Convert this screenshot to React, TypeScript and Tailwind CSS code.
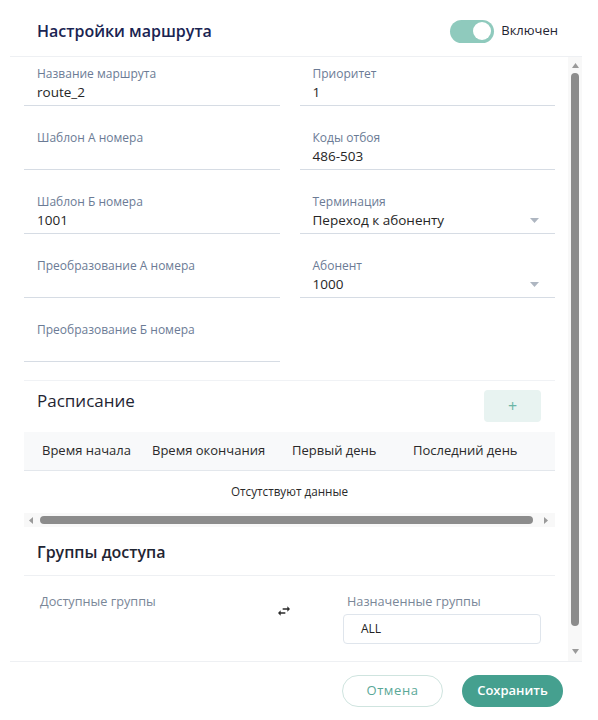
import React from "react";

function Field({ label, value, select }: { label?: string; value?: string; select?: boolean }) {
  if (!label) return <div />;
  return (
    <div className="px-[13px] pb-[3px] border-b border-[#d6dce4]">
      <div className="h-[16px] leading-[16px] text-[12px] text-[#6b7b95]">{label}</div>
      <div className="h-[20px] leading-[20px] text-[13.5px] text-[#262626] flex items-center justify-between">
        <span>{value}</span>
        {select && (
          <svg width="9" height="5" viewBox="0 0 9 5" className="mr-[3px]">
            <path d="M0 0h9L4.5 5z" fill="#aeb6c1" />
          </svg>
        )}
      </div>
    </div>
  );
}

export default function App() {
  return (
    <div className="w-[598px] h-[720px] bg-white font-['Open_Sans',sans-serif] overflow-hidden">
      <div className="ml-[10px] w-[572px] h-[720px] flex flex-col">
        {/* header */}
        <div className="h-[57px] shrink-0 pt-[6px] pl-[27px] pr-[24px] flex items-center justify-between border-b border-[#eef0f3]">
          <div className="text-[16px] font-semibold text-[#1a2452]">Настройки маршрута</div>
          <div className="flex items-center gap-[7px]">
            <div className="w-[44px] h-[23px] rounded-full bg-[#8fcabd] flex items-center justify-end pr-[3px]">
              <div className="w-[18px] h-[18px] rounded-full bg-white" />
            </div>
            <span className="text-[13px] font-medium text-[#1f2533]">Включен</span>
          </div>
        </div>

        {/* body */}
        <div className="h-[604px] shrink-0 flex">
          <div className="w-[558px] shrink-0 pl-[14px] pr-[13px] overflow-hidden">
            <div className="grid grid-cols-2 gap-x-5 gap-y-[24px] pt-[9px]">
              <Field label="Название маршрута" value="route_2" />
              <Field label="Приоритет" value="1" />
              <Field label="Шаблон А номера" value="" />
              <Field label="Коды отбоя" value="486-503" />
              <Field label="Шаблон Б номера" value="1001" />
              <Field label="Терминация" value="Переход к абоненту" select />
              <Field label="Преобразование А номера" value="" />
              <Field label="Абонент" value="1000" select />
              <Field label="Преобразование Б номера" value="" />
              <div />
            </div>

            {/* schedule */}
            <div className="mt-[18px] border-t border-[#f0f2f5] pt-[9px]">
              <div className="flex items-start justify-between">
                <div className="pl-[13px] pt-0 text-[17px] leading-[22px] text-[#1f2533]">Расписание</div>
                <div className="w-[57px] h-[32px] mr-[14px] rounded-[4px] bg-[#e8f3f1] flex items-center justify-center text-[#6ab5a6] text-[16px]">
                  +
                </div>
              </div>
              <div className="mt-[10px] h-[39px] bg-[#f8f9fa] border-b border-[#e3e7ec] flex items-center pl-[18px] text-[13px] text-[#2a2a2a]">
                <div className="w-[110px]">Время начала</div>
                <div className="w-[140px]">Время окончания</div>
                <div className="w-[121px]">Первый день</div>
                <div>Последний день</div>
              </div>
              <div className="h-[41px] flex items-center justify-center text-[11.7px] text-[#2a2a2a]">Отсутствуют данные</div>
              <div className="mt-[1px] h-[14px] bg-[#f8f8f8] flex items-center">
                <svg width="4" height="7" viewBox="0 0 4 7" className="ml-[5px]">
                  <path d="M4 0v7L0 3.5z" fill="#9a9a9a" />
                </svg>
                <div className="ml-[7px] w-[493px] h-[8px] rounded-full bg-[#8c8c8c]" />
                <svg width="4" height="7" viewBox="0 0 4 7" className="ml-[11px]">
                  <path d="M0 0v7L4 3.5z" fill="#9a9a9a" />
                </svg>
              </div>
            </div>

            {/* groups */}
            <div className="mt-[14px] pl-[13px] pb-[12px] border-b border-[#eef0f3] text-[16px] leading-[22px] font-semibold text-[#1f2533]">
              Группы доступа
            </div>
            <div className="flex pt-[15px]">
              <div className="w-[250px] pl-[16px] text-[12.7px] leading-[20px] text-[#7a8798]">Доступные группы</div>
              <div className="w-[20px] flex justify-center pt-[14px]">
                <svg width="12" height="12" viewBox="3 4 18 16">
                  <path
                    d="M6.99 11L3 15l3.99 4v-3H14v-2H6.99v-3zM21 9l-3.99-4v3H10v2h7.01v3L21 9z"
                    fill="#2b2b2b"
                  />
                </svg>
              </div>
              <div className="w-[49px]" />
              <div className="w-[198px]">
                <div className="pl-[4px] text-[12.7px] leading-[20px] text-[#7a8798]">Назначенные группы</div>
                <div className="mt-[3px] h-[30px] border border-[#dfe5ec] rounded-[4px] px-[17px] flex items-center text-[12px] text-[#222]">
                  ALL
                </div>
              </div>
            </div>
          </div>

          {/* vertical scrollbar */}
          <div className="w-[14px] shrink-0 bg-[#f8f8f8] flex flex-col items-center pt-[6px]">
            <svg width="7" height="5" viewBox="0 0 7 5">
              <path d="M0 5h7L3.5 0z" fill="#9a9a9a" />
            </svg>
            <div className="mt-[5px] w-[8px] h-[553px] rounded-full bg-[#8c8c8c]" />
            <svg width="7" height="5" viewBox="0 0 7 5" className="mt-[23px]">
              <path d="M0 0h7L3.5 5z" fill="#9a9a9a" />
            </svg>
          </div>
        </div>

        {/* footer */}
        <div className="flex-1 border-t border-[#eef0f3] pt-[13px] pr-[19px] flex justify-end items-start gap-[19px]">
          <button className="w-[101px] h-[32px] rounded-full border border-[#cfe4df] text-[13px] text-[#5aa897] tracking-[0.6px] bg-white">
            Отмена
          </button>
          <button className="w-[101px] h-[32px] rounded-full bg-[#45a08f] text-[13px] font-semibold text-white">
            Сохранить
          </button>
        </div>
      </div>
    </div>
  );
}
